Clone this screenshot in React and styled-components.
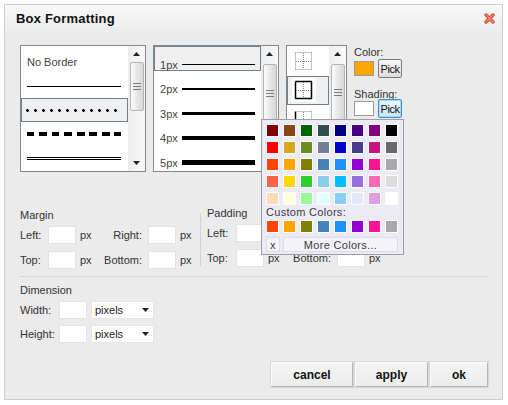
import styled, { createGlobalStyle } from 'styled-components';

const GlobalStyle = createGlobalStyle`
  body {
    margin: 0;
    background: #fff;
    font-family: "Liberation Sans", Arial, sans-serif;
    font-size: 11px;
    color: #333;
  }
`;

const Dialog = styled.div`
  box-sizing: border-box;
  width: 499px;
  height: 396px;
  margin: 4px;
  background: #ebebeb;
  border: 1px solid #cdcdcd;
  display: flex;
  flex-direction: column;
`;

const TitleBar = styled.div`
  height: 29px;
  flex: none;
  display: flex;
  align-items: center;
  justify-content: space-between;
  padding: 0 7px 2px 11px;
  box-sizing: border-box;
  background: linear-gradient(#f8f8f8, #ececec);
`;

const Title = styled.h1`
  margin: 0;
  font-size: 13px;
  font-weight: bold;
  letter-spacing: 0.2px;
  color: #111;
`;

const Body = styled.div`
  position: relative;
  flex: 1;
  padding: 11px 14px 0 15px;
  display: flex;
  flex-direction: column;
`;

const TopRow = styled.div`
  display: flex;
  align-items: flex-start;
  gap: 7px;
`;

const ListBox = styled.div`
  box-sizing: border-box;
  width: ${p => p.$w}px;
  height: 127px;
  border: 1px solid #828790;
  background: #fff;
  display: flex;
`;

const Items = styled.div`
  flex: 1;
  display: flex;
  flex-direction: column;
  padding-top: ${p => p.$top || 0}px;
`;

const Item = styled.div`
  box-sizing: border-box;
  height: ${p => p.$h}px;
  display: flex;
  align-items: center;
  gap: 4px;
  padding: ${p => p.$pad};
  border: 1px solid ${p => (p.$sel ? '#71808f' : 'transparent')};
  background: ${p => (p.$sel ? '#f0f0f0' : 'transparent')};
  color: #444;
`;

const Rule = styled.div`
  flex: 1;
  height: ${p => p.$t}px;
  background: #000;
`;

const DotRule = styled.div`
  flex: 1;
  height: 3px;
  background: radial-gradient(circle at 1.5px 1.5px, #000 1.1px, transparent 1.6px) 0 0 / 8px 3px repeat-x;
`;

const DashRule = styled.div`
  flex: 1;
  height: 4px;
  background: repeating-linear-gradient(90deg, #000 0 7.5px, transparent 7.5px 12.5px);
`;

const DoubleRule = styled.div`
  flex: 1;
  height: 0;
  border-top: 3px double #000;
`;

const IconTile = styled.div`
  width: 24px;
  height: 24px;
  background: #fff;
`;

const ScrollBar = styled.div`
  width: 17px;
  flex: none;
  display: flex;
  flex-direction: column;
  align-items: center;
  background: linear-gradient(90deg, #ededed, #f9f9f9);
`;

const Arrow = styled.div`
  height: 16px;
  width: 100%;
  flex: none;
  display: flex;
  align-items: center;
  justify-content: center;
`;

const Track = styled.div`
  flex: 1;
  width: 100%;
  display: flex;
  flex-direction: column;
  align-items: center;
`;

const Thumb = styled.div`
  box-sizing: border-box;
  width: 14px;
  height: ${p => p.$h}px;
  margin-top: ${p => p.$top}px;
  border: 1px solid #b4b4b4;
  border-radius: 2px;
  background: linear-gradient(90deg, #fbfbfb, #e4e4e4 60%, #d6d6d6);
  display: flex;
  align-items: center;
  justify-content: center;
`;

const ColorColumn = styled.div`
  display: flex;
  flex-direction: column;
`;

const SmallLabel = styled.div`
  line-height: 12px;
  margin-top: ${p => p.$mt}px;
  color: #333;
`;

const PickRow = styled.div`
  display: flex;
  align-items: center;
  gap: 4px;
  margin-top: ${p => p.$mt}px;
`;

const Swatch = styled.div`
  box-sizing: border-box;
  width: 20px;
  height: 15px;
  border: 1px solid #9a9a9a;
  background: ${p => p.$c};
`;

const PickButton = styled.button`
  box-sizing: border-box;
  width: 24px;
  height: 19px;
  padding: 0;
  font: inherit;
  font-size: 11px;
  letter-spacing: -0.5px;
  color: #111;
  border-radius: 2px;
  border: 1px solid ${p => (p.$focus ? '#3c8fd0' : '#7a7a7a')};
  background: ${p => (p.$focus ? 'linear-gradient(#eaf6fd, #c8e6f8)' : 'linear-gradient(#f6f6f6, #dedede)')};
  box-shadow: ${p => (p.$focus ? 'inset 0 0 0 1px #a8d8f6' : 'none')};
`;

const Popup = styled.div`
  position: absolute;
  left: 256px;
  top: 85px;
  box-sizing: border-box;
  width: 143px;
  height: 136px;
  padding: 4px 5px 2px 4px;
  border: 1px solid #9c9cab;
  background: #ecebf3;
  display: flex;
  flex-direction: column;
`;

const SwatchGrid = styled.div`
  display: grid;
  grid-template-columns: repeat(8, 13px);
  gap: 4px;
  margin-top: ${p => p.$mt || 0}px;
`;

const Chip = styled.div`
  box-sizing: border-box;
  width: 13px;
  height: 13px;
  border: 1px solid #fcfcff;
  background: ${p => p.$c};
`;

const PopupLabel = styled.div`
  line-height: 12px;
  margin-top: 1px;
  color: #3a3a4a;
  letter-spacing: 0.3px;
`;

const PopupButtons = styled.div`
  display: flex;
  gap: 3px;
  margin-top: 4px;
  height: 15px;
`;

const PopupButton = styled.div`
  box-sizing: border-box;
  flex: ${p => (p.$grow ? 1 : 'none')};
  width: ${p => (p.$grow ? 'auto' : '14px')};
  display: flex;
  align-items: center;
  justify-content: center;
  border: 1px solid #dcdce6;
  background: #f3f3f8;
  color: #3a3a4a;
  letter-spacing: 0.3px;
`;

const Fields = styled.div`
  display: flex;
  align-items: flex-start;
  margin-top: 37px;
`;

const FieldSet = styled.div`
  width: ${p => p.$w}px;
  margin-top: ${p => p.$shift || 0}px;
`;

const SectionLabel = styled.div`
  line-height: 13px;
  margin-bottom: 4px;
  color: #333;
`;

const FieldGrid = styled.div`
  display: grid;
  grid-template-columns: ${p => p.$cols};
  row-gap: ${p => p.$gap}px;
  align-items: center;
`;

const FieldLabel = styled.span`
  text-align: ${p => (p.$right ? 'right' : 'left')};
  padding-right: ${p => (p.$right ? 6 : 0)}px;
  white-space: nowrap;
`;

const NumInput = styled.input`
  box-sizing: border-box;
  width: 28px;
  height: 18px;
  margin: 0;
  padding: 0 2px;
  border: 1px solid #e3e3e3;
  background: #fff;
  font: inherit;
`;

const Unit = styled.span`
  padding-left: 4px;
`;

const VRule = styled.div`
  width: 1px;
  height: 53px;
  margin: 4px 6px 0 0;
  background: #d2d2d2;
`;

const HRule = styled.div`
  height: 1px;
  margin-top: 7px;
  background: #d6d6d6;
`;

const DimLabel = styled(SectionLabel)`
  margin-top: 7px;
`;

const Select = styled.div`
  box-sizing: border-box;
  width: 63px;
  height: 18px;
  margin-left: 4px;
  padding: 0 4px 0 3px;
  border: 1px solid #e6e6e6;
  background: #fff;
  display: flex;
  align-items: center;
  justify-content: space-between;
  color: #222;
`;

const Footer = styled.div`
  display: flex;
  justify-content: flex-end;
  gap: 2px;
  margin-top: 19px;
`;

const Button = styled.button`
  box-sizing: border-box;
  width: ${p => p.$w}px;
  height: 25px;
  padding: 0;
  font-family: "Liberation Sans", Arial, sans-serif;
  font-size: 12px;
  font-weight: bold;
  color: #111;
  background: linear-gradient(#f4f4f4, #ececec);
  border: 1px solid;
  border-color: #fafafa #b4b4b4 #b4b4b4 #fafafa;
  box-shadow: 0 0 0 1px #d8d8d8;
`;

const CloseIcon = () => (
  <svg width="11" height="11" viewBox="0 0 11 11">
    <path d="M2 2 L9 9 M9 2 L2 9" stroke="#d8493a" strokeWidth="3.4" strokeLinecap="round" />
    <path d="M2 2 L9 9 M9 2 L2 9" stroke="#f48b78" strokeWidth="1.3" strokeLinecap="round" />
  </svg>
);

const UpArrow = () => (
  <svg width="7" height="4" viewBox="0 0 7 4"><path d="M0 4 L3.5 0 L7 4 Z" fill="#222" /></svg>
);

const DownArrow = () => (
  <svg width="7" height="4" viewBox="0 0 7 4"><path d="M0 0 L3.5 4 L7 0 Z" fill="#222" /></svg>
);

const Grip = () => (
  <svg width="8" height="7" viewBox="0 0 8 7">
    <path d="M0 0.5 H8 M0 3.5 H8 M0 6.5 H8" stroke="#7c7c7c" strokeWidth="1" />
  </svg>
);

const Scroll = ({ top, h }) => (
  <ScrollBar>
    <Arrow><UpArrow /></Arrow>
    <Track>
      <Thumb $top={top} $h={h}><Grip /></Thumb>
    </Track>
    <Arrow><DownArrow /></Arrow>
  </ScrollBar>
);

const BoxIcon = ({ left, top, right, bottom }) => {
  const s = on => (on ? { stroke: '#000', strokeWidth: 1.5 } : { stroke: '#888', strokeWidth: 1, strokeDasharray: '1 1' });
  return (
    <IconTile>
      <svg width="24" height="24" viewBox="0 0 24 24">
        <line x1="3.5" y1="3.5" x2="3.5" y2="21" {...s(left)} />
        <line x1="3.5" y1="3.5" x2="20" y2="3.5" {...s(top)} />
        <line x1="19.5" y1="3.5" x2="19.5" y2="21" {...s(right)} />
        <line x1="3.5" y1="20.5" x2="20" y2="20.5" {...s(bottom)} />
        <line x1="11.5" y1="4" x2="11.5" y2="20" stroke="#888" strokeDasharray="1 1" />
        <line x1="4" y1="12.5" x2="19" y2="12.5" stroke="#888" strokeDasharray="1 1" />
      </svg>
    </IconTile>
  );
};

const palette = [
  '#800000', '#8b4513', '#006400', '#2f4f4f', '#000080', '#4b0082', '#800080', '#000000',
  '#ff0000', '#daa520', '#6b8e23', '#708090', '#0000cd', '#483d8b', '#c71585', '#696969',
  '#ff4500', '#ffa500', '#808000', '#4682b4', '#1e90ff', '#9400d3', '#ff1493', '#a9a9a9',
  '#ff6347', '#ffd700', '#32cd32', '#87ceeb', '#00bfff', '#9370db', '#ff69b4', '#dcdcdc',
  '#ffdab9', '#ffffe0', '#98fb98', '#e0ffff', '#87cefa', '#e6e6fa', '#dda0dd', '#ffffff',
];

const custom = ['#ff4500', '#ffa500', '#808000', '#4682b4', '#1e90ff', '#9400d3', '#ff1493', '#a9a9a9'];

const widths = [1, 2, 3, 4, 5];

const SideFields = ({ cols, a, b, c, d }) => (
  <FieldGrid $cols={cols} $gap={7}>
    <FieldLabel>{a}</FieldLabel>
    <NumInput />
    <Unit>px</Unit>
    <FieldLabel $right>{b}</FieldLabel>
    <NumInput />
    <Unit>px</Unit>
    <FieldLabel>{c}</FieldLabel>
    <NumInput />
    <Unit>px</Unit>
    <FieldLabel $right>{d}</FieldLabel>
    <NumInput />
    <Unit>px</Unit>
  </FieldGrid>
);

export default function App() {
  return (
    <>
      <GlobalStyle />
      <Dialog>
        <TitleBar>
          <Title>Box Formatting</Title>
          <CloseIcon />
        </TitleBar>
        <Body>
          <TopRow>
            <ListBox $w={126}>
              <Items $top={4}>
                <Item $h={24} $pad="0 6px 0 5px">No Border</Item>
                <Item $h={24} $pad="0 6px 0 5px"><Rule $t={1} /></Item>
                <Item $h={24} $pad="0 5px 0 4px" $sel><DotRule /></Item>
                <Item $h={24} $pad="0 6px 0 5px"><DashRule /></Item>
                <Item $h={24} $pad="0 6px 0 5px"><DoubleRule /></Item>
              </Items>
              <Scroll top={0} h={49} />
            </ListBox>

            <ListBox $w={126}>
              <Items>
                {widths.map(w => (
                  <Item key={w} $h={24.5} $pad="13px 5px 0 5px" $sel={w === 1}>
                    <span>{w}px</span>
                    <Rule $t={w} />
                  </Item>
                ))}
              </Items>
              <Scroll top={2} h={58} />
            </ListBox>

            <ListBox $w={61}>
              <Items>
                <Item $h={29.5} $pad="0 4px">
                  <BoxIcon />
                </Item>
                <Item $h={29.5} $pad="0 4px" $sel>
                  <BoxIcon left top right bottom />
                </Item>
                <Item $h={29.5} $pad="0 4px">
                  <BoxIcon left />
                </Item>
              </Items>
              <Scroll top={2} h={57} />
            </ListBox>

            <ColorColumn>
              <SmallLabel $mt={1}>Color:</SmallLabel>
              <PickRow $mt={1}>
                <Swatch $c="#ffa500" />
                <PickButton>Pick</PickButton>
              </PickRow>
              <SmallLabel $mt={10}>Shading:</SmallLabel>
              <PickRow $mt={-1}>
                <Swatch $c="#ffffff" />
                <PickButton $focus>Pick</PickButton>
              </PickRow>
            </ColorColumn>
          </TopRow>

          <Fields>
            <FieldSet $w={180}>
              <SectionLabel>Margin</SectionLabel>
              <SideFields cols="28px 28px 24px 48px 28px auto" a="Left:" b="Right:" c="Top:" d="Bottom:" />
            </FieldSet>
            <VRule />
            <FieldSet $w={190} $shift={-2}>
              <SectionLabel>Padding</SectionLabel>
              <SideFields cols="29px 28px 25px 48px 28px auto" a="Left:" b="Right:" c="Top:" d="Bottom:" />
            </FieldSet>
          </Fields>

          <HRule />

          <DimLabel>Dimension</DimLabel>
          <FieldGrid $cols="39px 28px auto 1fr" $gap={6}>
            <FieldLabel>Width:</FieldLabel>
            <NumInput />
            <Select>pixels<DownArrow /></Select>
            <span />
            <FieldLabel>Height:</FieldLabel>
            <NumInput />
            <Select>pixels<DownArrow /></Select>
            <span />
          </FieldGrid>

          <Footer>
            <Button $w={82}>cancel</Button>
            <Button $w={73}>apply</Button>
            <Button $w={58}>ok</Button>
          </Footer>

          <Popup>
            <SwatchGrid>
              {palette.map((c, i) => <Chip key={i} $c={c} />)}
            </SwatchGrid>
            <PopupLabel>Custom Colors:</PopupLabel>
            <SwatchGrid $mt={2}>
              {custom.map((c, i) => <Chip key={i} $c={c} />)}
            </SwatchGrid>
            <PopupButtons>
              <PopupButton>x</PopupButton>
              <PopupButton $grow>More Colors...</PopupButton>
            </PopupButtons>
          </Popup>
        </Body>
      </Dialog>
    </>
  );
}
